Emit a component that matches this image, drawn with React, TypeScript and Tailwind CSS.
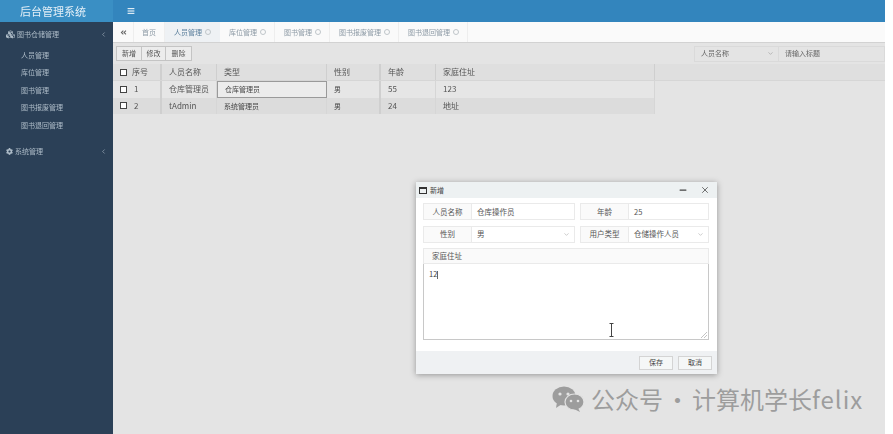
import { AlignJustify, ChevronLeft, ChevronDown, Minus, X } from 'lucide-react';
import { FaCubes, FaCog, FaAngleDoubleLeft } from 'react-icons/fa';

const font = { fontFamily: '"Noto Sans CJK SC", "Noto Sans", sans-serif' };

const menuItems = ['人员管理', '库位管理', '图书管理', '图书报废管理', '图书退回管理'];
const tabs = ['人员管理', '库位管理', '图书管理', '图书报废管理', '图书退回管理'];
const widths = ['w-[49px]', 'w-[55px]', 'w-[110px]', 'w-[54px]', 'w-[55px]', 'w-[219px]'];
const rows = [
  ['1', '仓库管理员', '仓库管理员', '男', '55', '123'],
  ['2', 'tAdmin', '系统管理员', '男', '24', '地址'],
];

function Checkbox() {
  return <span className="w-[7px] h-[7px] border border-[#444] bg-white shrink-0" />;
}

function Sidebar() {
  return (
    <div className="w-[113px] shrink-0 flex flex-col">
      <div className="h-[22px] bg-[#3a8fc4] text-[#e3eff7] text-[11px] flex items-center pl-[20px]">后台管理系统</div>
      <div className="flex-1 bg-[#2b4057] text-[#aebcc8] text-[7px]">
        <div className="h-[24px] flex items-center px-[6px] gap-[2px]">
          <FaCubes size={9} />
          <span className="flex-1">图书仓储管理</span>
          <ChevronLeft size={7} />
        </div>
        <div className="flex flex-col pl-[21px] pb-[6px]">
          {menuItems.map((m) => (
            <div key={m} className="h-[17.5px] flex items-center">{m}</div>
          ))}
        </div>
        <div className="h-[24px] flex items-center px-[6px] gap-[2px]">
          <FaCog size={7} />
          <span className="flex-1">系统管理</span>
          <ChevronLeft size={7} />
        </div>
      </div>
    </div>
  );
}

function Tabs() {
  return (
    <div className="h-[20px] bg-[#fafafa] border-b border-[#d2d2d2] flex text-[7px] text-[#8d9aa5] box-content">
      <div className="w-[21px] flex items-center justify-center border-r border-[#eee] text-[#666]">
        <FaAngleDoubleLeft size={7} />
      </div>
      <div className="w-[31px] flex items-center justify-center border-r border-[#eee]">首页</div>
      {tabs.map((t, i) => (
        <div
          key={t}
          className={
            i === 0
              ? 'w-[55px] pl-[9px] flex items-center gap-[3px] bg-[#eef1f4] text-[#5b7f9c]'
              : 'pl-[9px] pr-[8px] flex items-center gap-[3px] border-r border-[#eee]'
          }
        >
          {t}
          <span className="w-[6px] h-[6px] rounded-full border-[1.5px] border-[#c0c6ca]" />
        </div>
      ))}
    </div>
  );
}

function Toolbar() {
  return (
    <div className="h-[21px] flex items-center justify-between pl-[3px] text-[7px] text-[#555]">
      <div className="flex h-[15px] border border-[#c4c4c4] bg-[#ececec]">
        <span className="w-[25px] flex items-center justify-center border-r border-[#c4c4c4]">新增</span>
        <span className="w-[24px] flex items-center justify-center border-r border-[#c4c4c4]">修改</span>
        <span className="w-[25px] flex items-center justify-center">删除</span>
      </div>
      <div className="flex h-[16px] border border-[#dadada] text-[#666]">
        <span className="w-[84px] flex items-center justify-between pl-[6px] pr-[4px] border-r border-[#dadada]">
          人员名称
          <ChevronDown size={7} className="text-[#999]" />
        </span>
        <span className="w-[105px] flex items-center pl-[6px]">请输入标题</span>
      </div>
    </div>
  );
}

function Table() {
  return (
    <div className="text-[8px] text-[#555]">
      <div className="flex h-[16px] bg-[#dfdfdf] border-b border-[#d6d6d6] box-content">
        <div className={`${widths[0]} flex items-center pl-[7px] gap-[5px] border-r-2 border-[#cfcfcf]`}>
          <Checkbox />序号
        </div>
        {['人员名称', '类型', '性别', '年龄', '家庭住址'].map((h, i) => (
          <div key={h} className={`${widths[i + 1]} flex items-center pl-[7px] ${i === 2 ? 'border-r-2' : 'border-r'} border-[#cfcfcf]`}>
            {h}
          </div>
        ))}
      </div>
      {rows.map((r, ri) => (
        <div key={r[0]} className={`flex h-[16.5px] w-[542px] ${ri === 1 ? 'bg-[#dcdcdc]' : 'bg-[#e6e6e6]'}`}>
          <div className={`${widths[0]} flex items-center pl-[7px] gap-[7px] border-r-2 border-[#cfcfcf]`}>
            <Checkbox />{r[0]}
          </div>
          {r.slice(1).map((c, i) => (
            <div
              key={i}
              className={`${widths[i + 1]} flex items-center pl-[7px] ${
                ri === 0 && i === 1 ? 'border border-[#9a9a9a] bg-[#ececec]' : i === 2 ? 'border-r-2 border-[#cfcfcf]' : 'border-r border-[#d6d6d6]'
              } ${i === 1 || i === 2 ? 'text-[7px] text-[#444]' : ''}`}
            >
              {c}
            </div>
          ))}
        </div>
      ))}
    </div>
  );
}

function Field({ label, value, select, width }: { label: string; value: string; select?: boolean; width: string }) {
  return (
    <div className={`flex h-[17px] border border-[#eaeaea] text-[7.5px] text-[#555] ${width}`}>
      <span className="w-[48px] shrink-0 flex items-center justify-center bg-[#fafafa] border-r border-[#eaeaea]">{label}</span>
      <span className="flex-1 flex items-center justify-between pl-[5px] pr-[4px] bg-white">
        {value}
        {select && <ChevronDown size={7} className="text-[#aaa]" />}
      </span>
    </div>
  );
}

function Modal() {
  return (
    <div className="absolute left-[416px] top-[182px] w-[301px] h-[192px] bg-white shadow-[0_1px_6px_rgba(0,0,0,0.35)] flex flex-col">
      <div className="h-[16px] bg-[#edf1f2] flex items-center pl-[3px] pr-[7px] text-[7px] text-[#444]">
        <span className="w-[8px] h-[7px] border border-[#333] border-t-2 mr-[3px]" />
        <span className="flex-1">新增</span>
        <Minus size={10} strokeWidth={3} className="text-[#444] mr-[12px]" />
        <X size={10} className="text-[#555]" />
      </div>
      <div className="flex-1 pl-[7px] pr-[8px] pt-[5px] flex flex-col gap-[5.5px]">
        <div className="flex justify-between">
          <Field label="人员名称" value="仓库操作员" width="w-[152px]" />
          <Field label="年龄" value="25" width="w-[129px]" />
        </div>
        <div className="flex justify-between">
          <Field label="性别" value="男" select width="w-[152px]" />
          <Field label="用户类型" value="仓储操作人员" select width="w-[129px]" />
        </div>
        <div className="flex flex-col">
          <div className="h-[16px] border border-[#eaeaea] bg-[#fafafa] flex items-center pl-[8px] text-[7.5px] text-[#555]">家庭住址</div>
          <div className="relative h-[76px] border border-t-0 border-[#c8c8c8] bg-white text-[7.5px] text-[#444] pl-[5px] pt-[4px]">
            12<span className="inline-block w-px h-[8px] bg-[#666] align-middle" />
            <svg className="absolute right-[1px] bottom-[1px] w-[6px] h-[6px]" viewBox="0 0 6 6" stroke="#aaa" strokeWidth="0.7">
              <path d="M0 6 L6 0 M3 6 L6 3" />
            </svg>
            <svg className="absolute left-[185px] top-[59px] w-[5px] h-[14px]" viewBox="0 0 5 14" stroke="#444" fill="none" strokeWidth="1">
              <path d="M0.5 0.5 H4.5 M2.5 0.5 V13.5 M0.5 13.5 H4.5" />
            </svg>
          </div>
        </div>
      </div>
      <div className="h-[23px] bg-[#eff1f3] flex items-center justify-end gap-[5px] pr-[5px] text-[7px] text-[#444]">
        <span className="w-[34px] h-[14px] flex items-center justify-center bg-[#f5f7f7] border border-[#d4d4d4]">保存</span>
        <span className="w-[34px] h-[14px] flex items-center justify-center bg-[#f5f7f7] border border-[#d4d4d4]">取消</span>
      </div>
    </div>
  );
}

function Watermark() {
  return (
    <div className="absolute left-[552px] top-[384px] flex items-center gap-[7px] text-[#9d9d9d] text-[24px] leading-[30px]">
      <svg width="32" height="26" viewBox="0 0 32 26" fill="#9d9d9d">
        <ellipse cx="12" cy="10" rx="11.5" ry="9.5" />
        <path d="M5 16 L4 22 L10 18 Z" />
        <ellipse cx="22.5" cy="16" rx="9.5" ry="8" stroke="#e3e3e3" strokeWidth="1.2" />
        <path d="M26 22 L28 26 L22 23 Z" />
        <circle cx="8" cy="8" r="1.6" fill="#e3e3e3" />
        <circle cx="16" cy="8" r="1.6" fill="#e3e3e3" />
        <circle cx="19" cy="15" r="1.3" fill="#e3e3e3" />
        <circle cx="26" cy="15" r="1.3" fill="#e3e3e3" />
      </svg>
      <span className="whitespace-nowrap flex">
        <span>公众号</span>
        <span className="w-[29px] text-center">·</span>
        <span>计算机学长</span>
        <span className="tracking-[1px]">felix</span>
      </span>
    </div>
  );
}

export default function App() {
  return (
    <div className="relative w-[893px] h-[434px] bg-white overflow-hidden" style={font}>
      <div className="w-[885px] h-full flex blur-[0.35px]">
        <Sidebar />
        <div className="flex-1 flex flex-col bg-[#e4e4e4]">
          <div className="h-[22px] bg-[#3385bd] flex items-center pl-[14px] text-white">
            <AlignJustify size={8} strokeWidth={3} />
          </div>
          <Tabs />
          <Toolbar />
          <Table />
        </div>
      </div>
      <Modal />
      <Watermark />
    </div>
  );
}
